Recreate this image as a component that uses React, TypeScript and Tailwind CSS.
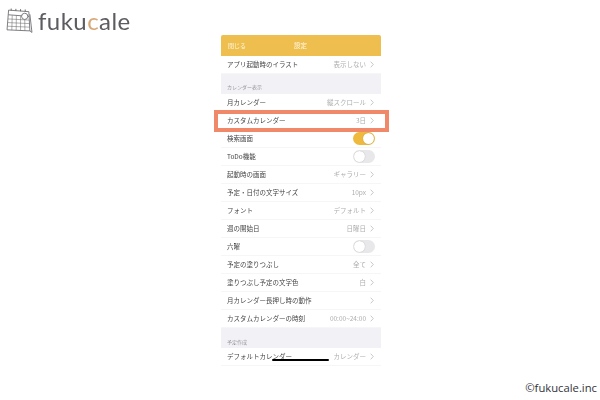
import React from "react";

const jp = { fontFamily: '"Noto Sans CJK JP", "Noto Sans", sans-serif' };

function Chevron() {
  return (
    <svg width="4" height="7" viewBox="0 0 4 7" className="ml-[4px] shrink-0">
      <path d="M0.7 0.7 L3.3 3.5 L0.7 6.3" fill="none" stroke="#b0b0b0" strokeWidth="0.7" />
    </svg>
  );
}

function Toggle({ on }: { on?: boolean }) {
  return (
    <div className={`-mr-[1px] flex h-[13px] w-[22px] items-center rounded-full p-px ${on ? "justify-end bg-[#eeb93c]" : "justify-start bg-[#e8e8ea]"}`}>
      <div className="h-[11px] w-[11px] rounded-full bg-white shadow-[0_0_1px_rgba(0,0,0,0.3)]" />
    </div>
  );
}

function Row({ label, value, toggle, chevron = true }: { label: string; value?: string; toggle?: "on" | "off"; chevron?: boolean }) {
  return (
    <div className="flex h-[18px] items-center justify-between border-b border-[#f6f6f6] pl-[6px] pr-[7px]">
      <span className="text-[6.5px] text-[#444444] whitespace-nowrap">{label}</span>
      {toggle ? (
        <Toggle on={toggle === "on"} />
      ) : (
        <span className="flex items-center text-[6.5px] text-[#aeaeae] whitespace-nowrap">
          {value}
          {chevron && <Chevron />}
        </span>
      )}
    </div>
  );
}

function Section({ label, pb }: { label: string; pb: string }) {
  return (
    <div className={`flex h-[20px] items-end bg-[#f2f2f6] pl-[6px] text-[5px] leading-[6px] text-[#98989d] ${pb}`}>{label}</div>
  );
}

function Logo() {
  return (
    <div className="flex items-center pl-[6px] pt-[7px]">
      <svg width="27" height="27" viewBox="0 0 26 26" fill="none" stroke="#66666a" strokeWidth="0.8" className="shrink-0">
        <path d="M2.5 3 L22 4.5 L23 23 L1 22 Z" fill="#fff" />
        <path d="M23 23 L25 24.5 L23 7" />
        <path d="M2.3 7.5 L22.2 9" />
        <path d="M5 3.4 V1.5 M9.5 3.7 V1.8 M14 4 V2.1 M18.5 4.3 V2.4" strokeWidth="0.9" />
        <path d="M2 11.5 L22.4 12.6 M1.8 15 L22.6 16 M1.5 18.5 L22.8 19.4" strokeWidth="0.5" />
        <path d="M6 8 L5.6 22.2 M10 8.3 L9.8 22.4 M14 8.6 L14 22.6 M18 8.8 L18.2 22.8" strokeWidth="0.5" />
        <circle cx="18" cy="9" r="3" fill="#fff" />
      </svg>
      <div className="ml-[5px] text-[24px] font-normal leading-none tracking-[0.45px] text-[#5c5c61]" style={{ fontFamily: "Lato, sans-serif" }}>
        fuku<span className="text-[#d9a878]">c</span>ale
      </div>
    </div>
  );
}

export default function App() {
  return (
    <div className="grid h-[400px] w-[600px] grid-cols-[221px_160px_219px] overflow-hidden bg-white" style={jp}>
      <div className="blur-[0.3px]">
        <Logo />
      </div>

      <div className="relative pt-[35px] blur-[0.35px]">
        <div className="flex h-[21px] items-center rounded-t-[2px] bg-[#eebf4f] pl-[7px] text-[6px] text-[#fff8e8]">
          <span className="w-[66px]">閉じる</span>
          <span className="text-[6.5px]">設定</span>
        </div>
        <Row label="アプリ起動時のイラスト" value="表示しない" />
        <Section label="カレンダー表示" pb="pb-[4px]" />
        <Row label="月カレンダー" value="縦スクロール" />
        <div className="relative">
          <Row label="カスタムカレンダー" value="3日" />
          <div className="absolute -top-[2px] -bottom-[2px] -left-[7px] -right-[8px] border-[4px] border-[#f0896a]" />
        </div>
        <Row label="検索画面" toggle="on" />
        <Row label="ToDo機能" toggle="off" />
        <Row label="起動時の画面" value="ギャラリー" />
        <Row label="予定・日付の文字サイズ" value="10px" />
        <Row label="フォント" value="デフォルト" />
        <Row label="週の開始日" value="日曜日" />
        <Row label="六曜" toggle="off" />
        <Row label="予定の塗りつぶし" value="全て" />
        <Row label="塗りつぶし予定の文字色" value="白" />
        <Row label="月カレンダー長押し時の動作" />
        <Row label="カスタムカレンダーの時刻" value="00:00~24:00" />
        <Section label="予定作成" pb="pb-[3px]" />
        <Row label="デフォルトカレンダー" value="カレンダー" />
        <div className="absolute left-[51px] top-[359px] h-[2px] w-[57px] rounded-full bg-black" />
      </div>

      <div className="flex items-end justify-end pb-[7px] pr-[3px]">
        <span className="text-[11.25px] leading-none text-[#33333a]" style={{ fontFamily: '"Open Sans", sans-serif' }}>©fukucale.inc</span>
      </div>
    </div>
  );
}
